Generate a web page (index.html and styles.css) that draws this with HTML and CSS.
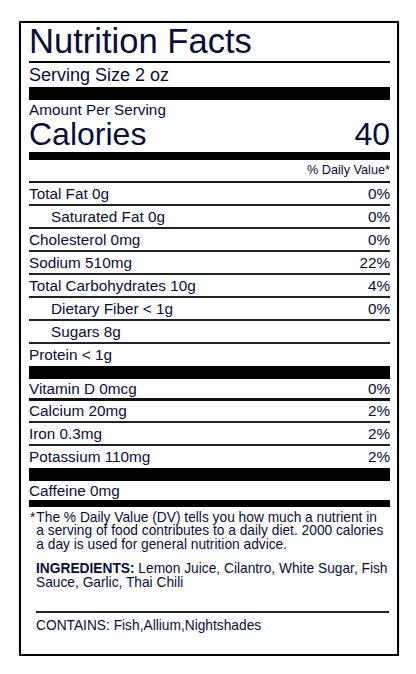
FILE: index.html
```html
<!DOCTYPE html>
<html lang="en">
<head>
  <meta charset="UTF-8">
  <title>Nutrition Facts</title>
  <link rel="stylesheet" href="styles.css">
</head>
<body>
  <div class="label">
    <h1 class="title">Nutrition Facts</h1>
    <div class="serving">Serving Size 2 oz</div>
    <div class="bar bar-lg"></div>
    <div class="amount">Amount Per Serving</div>
    <div class="calories"><span>Calories</span><span>40</span></div>
    <div class="bar bar-md"></div>
    <div class="dv-head">% Daily Value*</div>

    <div class="row"><span>Total Fat 0g</span><span>0%</span></div>
    <div class="row sub"><span>Saturated Fat 0g</span><span>0%</span></div>
    <div class="row"><span>Cholesterol 0mg</span><span>0%</span></div>
    <div class="row"><span>Sodium 510mg</span><span>22%</span></div>
    <div class="row"><span>Total Carbohydrates 10g</span><span>4%</span></div>
    <div class="row sub"><span>Dietary Fiber &lt; 1g</span><span>0%</span></div>
    <div class="row sub"><span>Sugars 8g</span></div>
    <div class="row last"><span>Protein &lt; 1g</span></div>
    <div class="bar bar-lg"></div>

    <div class="row vit"><span>Vitamin D 0mcg</span><span>0%</span></div>
    <div class="row short"><span>Calcium 20mg</span><span>2%</span></div>
    <div class="row"><span>Iron 0.3mg</span><span>2%</span></div>
    <div class="row last"><span>Potassium 110mg</span><span>2%</span></div>
    <div class="bar bar-lg"></div>
    <div class="row caff"><span>Caffeine 0mg</span></div>
    <div class="bar bar-sm"></div>

    <div class="footnote">
      <span class="star">*</span>
      <p>The % Daily Value (DV) tells you how much a nutrient in<br>a serving of food contributes to a daily diet. 2000 calories<br>a day is used for general nutrition advice.</p>
    </div>
    <p class="ingredients"><b>INGREDIENTS:</b> Lemon Juice, Cilantro, White Sugar, Fish<br>Sauce, Garlic, Thai Chili</p>
    <div class="divider"></div>
    <p class="contains">CONTAINS: Fish,Allium,Nightshades</p>
  </div>
</body>
</html>
```

FILE: styles.css
```css
body {
  margin: 0;
  background: #fff;
  font-family: "Liberation Sans", Arial, sans-serif;
  color: #0c0c3a;
}
.label {
  width: 361px;
  margin: 21px 0 0 19px;
  padding: 0 7px 21.5px 8px;
  border: 2px solid #000;
  box-shadow: 0 0 1px rgba(0,0,0,0.4);
}
.title {
  margin: 0;
  font-size: 34.6px;
  font-weight: normal;
  line-height: 37px;
  padding-bottom: 1px;
  border-bottom: 2px solid #000;
}
.serving {
  font-size: 18px;
  line-height: 24px;
}
.bar {
  background: #000;
}
.bar-lg {
  height: 13px;
}
.bar-md {
  height: 8px;
}
.bar-sm {
  height: 7px;
}
.amount {
  font-size: 15.3px;
  line-height: 20px;
}
.calories {
  display: flex;
  justify-content: space-between;
  font-size: 32px;
  line-height: 29px;
  padding-bottom: 3px;
}
.dv-head {
  text-align: right;
  font-size: 12.7px;
  line-height: 21px;
  border-bottom: 2px solid #1a1a1a;
}
.row {
  display: flex;
  justify-content: space-between;
  font-size: 15.3px;
  line-height: 21px;
  border-bottom: 2px solid #222;
}
.row.sub {
  padding-left: 22px;
}
.row.last {
  line-height: 22px;
  border-bottom: none;
}
.row.vit {
  line-height: 19px;
  border-bottom: 3px solid #111;
}
.row.short {
  line-height: 20px;
}
.row.caff {
  line-height: 19px;
  border-bottom: none;
}
.footnote {
  display: flex;
  gap: 1px;
  padding: 4px 0 0 1px;
  font-size: 13.75px;
  line-height: 13.3px;
}
.footnote p {
  margin: 0;
}
.ingredients {
  margin: 11.6px 0 0 7px;
  font-size: 13.75px;
  line-height: 13.3px;
}
.divider {
  margin: 22px 1px 0 7px;
  border-top: 2px solid #222;
}
.contains {
  margin: 6px 0 0 7px;
  font-size: 13.75px;
  line-height: 13.3px;
}
```
